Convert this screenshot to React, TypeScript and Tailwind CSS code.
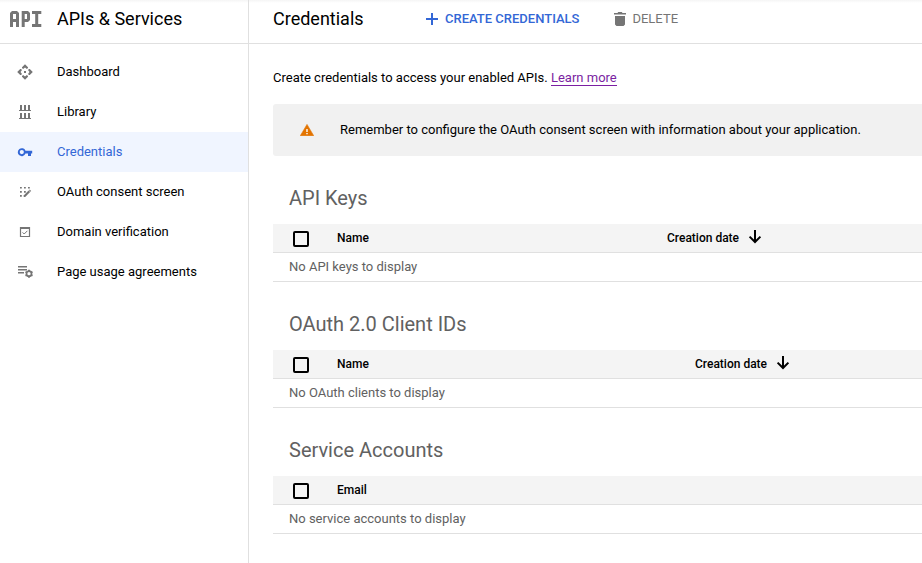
import type { ReactNode } from "react";

function ApiLogo() {
  return (
    <svg width="32" height="16" viewBox="0 0 32 16" fill="#757575" fillRule="evenodd">
      <path d="M0 16V2L2 0H7L9 2V16H6V11H3V16ZM3 3V8H6V3Z" />
      <path d="M11.7 16V0H18L20 2V9L18 11H14.7V16ZM14.7 3V8H17V3Z" />
      <path d="M22 0H31.3V3H28.2V13H31.3V16H22V13H25.2V3H22Z" />
    </svg>
  );
}

function DashboardIcon() {
  return (
    <svg width="16" height="16" viewBox="0 0 16 16" fill="#757575">
      <path d="M8 0.2L11 3.2V4L9.9 5L8 3.5L6.1 5L5 4V3.2Z" />
      <path d="M8 15.8L11 12.8V12L9.9 11L8 12.5L6.1 11L5 12V12.8Z" />
      <path d="M0.2 8L3.2 5H4L5 6.1L3.5 8L5 9.9L4 11H3.2Z" />
      <path d="M15.8 8L12.8 5H12L11 6.1L12.5 8L11 9.9L12 11H12.8Z" />
      <rect x="7" y="7" width="2" height="2" />
    </svg>
  );
}

function LibraryIcon() {
  return (
    <svg width="16" height="16" viewBox="0 0 16 16" fill="#757575">
      <path d="M3 1h2v5h2V1h2v5h2V1h2v5h1v1H2V6h1zM3 9h2v5h2V9h2v5h2V9h2v5h1v1H2v-1h1z" />
    </svg>
  );
}

function KeyIcon() {
  return (
    <svg width="16" height="16" viewBox="0 0 16 16" fill="#3367d6" fillRule="evenodd">
      <path d="M8.5 6.7A4 4 0 1 0 8.5 9.6H11V12H14V9.6H15.2V6.7ZM4.8 6A2.1 2.1 0 1 1 4.8 10.2A2.1 2.1 0 0 1 4.8 6Z" />
    </svg>
  );
}

function ConsentIcon() {
  return (
    <svg width="16" height="16" viewBox="0 0 16 16" fill="#757575">
      <path d="M3 3h1.8v1.6H3zM7 3h1.8v1.6H7zM11 3h1.8v1.6H11zM3 7h1.8v1.8H3zM7 7h1.8v1.8H7zM3 11h1.8v1.8H3z" />
      <path d="M6.7 11.5L11.6 6.6L13.1 8.1L8.2 13H6.7Z" />
      <path d="M12 6.2L12.7 5.5L14.2 7L13.5 7.7Z" />
    </svg>
  );
}

function DomainIcon() {
  return (
    <svg width="16" height="16" viewBox="0 0 16 16" fill="#757575">
      <path fillRule="evenodd" d="M2.9 2.9h10.2v10.2H2.9zM4.1 5v6.9h7.8V5z" />
      <path d="M5.6 8.4L7.2 10L10.4 6.8" fill="none" stroke="#757575" />
    </svg>
  );
}

function AgreementsIcon() {
  return (
    <svg width="16" height="16" viewBox="0 0 16 16" fill="#757575">
      <path d="M1 2h9v1.4H1zM1 5h9v1.4H1zM1 8h6v1.4H1z" />
      <g fill="none" stroke="#757575">
        <circle cx="12" cy="9.7" r="2.5" strokeWidth="1.7" />
        <path
          d="M12 5.7V7.3M12 12.1V13.7M8.5 7.7L9.9 8.5M14.1 10.9L15.5 11.7M8.5 11.7L9.9 10.9M14.1 8.5L15.5 7.7"
          strokeWidth="1.9"
        />
      </g>
    </svg>
  );
}

function DownArrow() {
  return (
    <svg className="ml-[9px] -translate-y-px" width="14" height="14" viewBox="0 0 14 14" fill="none" stroke="#000" strokeWidth="2">
      <path d="M7 0V12M1.6 6.6L7 12L12.4 6.6" />
    </svg>
  );
}

const navItems: { label: string; icon: ReactNode; active?: boolean }[] = [
  { label: "Dashboard", icon: <DashboardIcon /> },
  { label: "Library", icon: <LibraryIcon /> },
  { label: "Credentials", icon: <KeyIcon />, active: true },
  { label: "OAuth consent screen", icon: <ConsentIcon /> },
  { label: "Domain verification", icon: <DomainIcon /> },
  { label: "Page usage agreements", icon: <AgreementsIcon /> },
];

function Sidebar() {
  return (
    <aside className="w-[249px] shrink-0 border-r border-[#e0e0e0]">
      <div className="flex h-11 items-center border-b border-[#e0e0e0] pb-[5px] pl-[10px]">
        <ApiLogo />
        <h1 className="ml-[15px] text-[18px] leading-6">APIs &amp; Services</h1>
      </div>
      <nav className="pt-2">
        {navItems.map((item) => (
          <a
            key={item.label}
            className={`flex h-10 items-center pl-[17px] ${item.active ? "bg-[#f0f5ff] text-[#3367d6]" : ""}`}
          >
            {item.icon}
            <span className="ml-6">{item.label}</span>
          </a>
        ))}
      </nav>
    </aside>
  );
}

function TableSection({
  title,
  column,
  empty,
  dateOffset,
}: {
  title: string;
  column: string;
  empty: string;
  dateOffset?: string;
}) {
  return (
    <section className="h-[126px]">
      <h2 className="h-[52px] pl-4 pt-3 text-[20px] leading-7 text-[#616161]">{title}</h2>
      <div className="flex h-[29px] items-center border-b border-[#e0e0e0] bg-[#f4f4f4] pl-5 text-[12px] font-medium">
        <span className="mt-0.5 size-4 rounded-[2px] border-2 border-black" />
        <span className="ml-7 w-[330px]">{column}</span>
        {dateOffset && (
          <span className={`flex items-center ${dateOffset}`}>
            Creation date
            <DownArrow />
          </span>
        )}
      </div>
      <div className="flex h-[29px] items-center border-b border-[#e0e0e0] pl-4 text-[#616161]">{empty}</div>
    </section>
  );
}

export default function App() {
  return (
    <div className="flex h-[563px] w-[922px] overflow-hidden bg-white bg-[linear-gradient(#f5f5f5,#fff_3px)] font-[Roboto,sans-serif] text-[13px] leading-5 text-black">
      <Sidebar />
      <main className="min-w-0 flex-1">
        <header className="flex h-11 items-center border-b border-[#e0e0e0] pb-[5px] pl-6">
          <h2 className="w-[153px] text-[18px] leading-6">Credentials</h2>
          <button className="flex items-center font-medium text-[#3367d6]">
            <svg width="12" height="12" viewBox="0 0 12 12" fill="#3367d6">
              <path d="M5 0h2v5h5v2H7v5H5V7H0V5h5z" />
            </svg>
            <span className="ml-[7px]">CREATE CREDENTIALS</span>
          </button>
          <button className="ml-[35px] flex items-center text-[#757575]">
            <svg width="12" height="14" viewBox="0 0 12 14" fill="#757575">
              <path d="M0 1h3.5l.7-1h3.6l.7 1H12v1.5H0zM1 4h10v8.5L9.5 14h-7L1 12.5z" />
            </svg>
            <span className="ml-1.5">DELETE</span>
          </button>
        </header>
        <div className="pl-6 pt-6">
          <p>
            Create credentials to access your enabled APIs.{" "}
            <a className="inline-block border-b border-[#7b1fa2] leading-[15px] text-[#7b1fa2]">Learn more</a>
          </p>
          <div className="mt-4 flex h-[52px] items-center rounded-l-[3px] bg-[#f1f1f1] pl-[27px]">
            <svg width="14" height="12" viewBox="0 0 14 12">
              <path d="M7 0.4L13.7 11.7H0.3z" fill="#e37400" stroke="#e37400" strokeWidth="0.6" strokeLinejoin="round" />
              <path d="M6.3 5h1.4v3H6.3zM6.3 8.9h1.4v1.3H6.3z" fill="#fff" />
            </svg>
            <span className="ml-[26px]">
              Remember to configure the OAuth consent screen with information about your application.
            </span>
          </div>
          <div className="pt-4">
            <TableSection title="API Keys" column="Name" empty="No API keys to display" dateOffset="ml-0" />
            <TableSection
              title="OAuth 2.0 Client IDs"
              column="Name"
              empty="No OAuth clients to display"
              dateOffset="ml-7"
            />
            <TableSection title="Service Accounts" column="Email" empty="No service accounts to display" />
          </div>
        </div>
      </main>
    </div>
  );
}
